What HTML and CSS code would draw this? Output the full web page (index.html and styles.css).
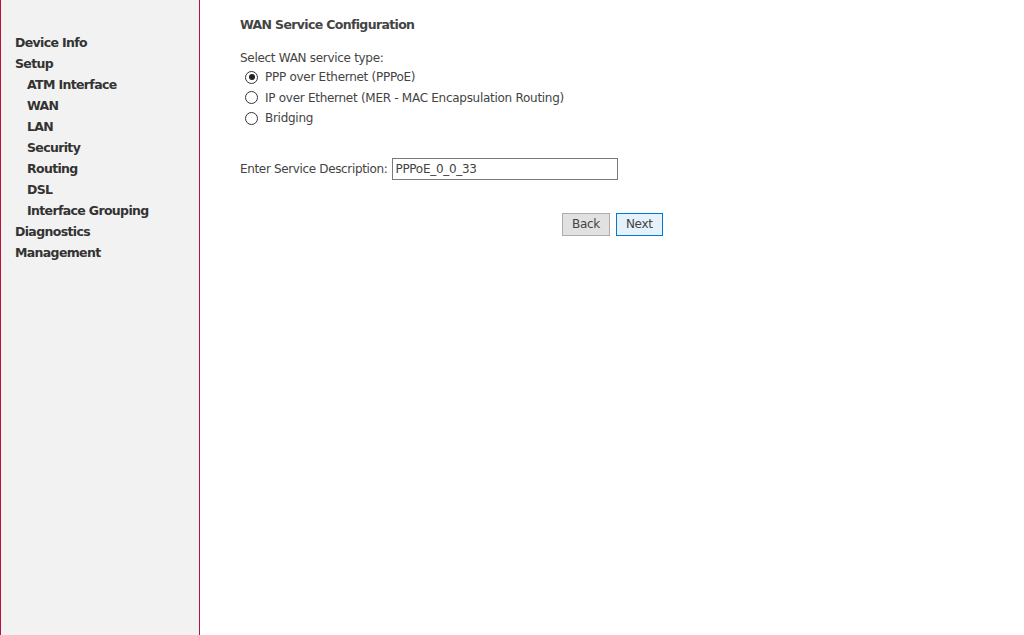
FILE: index.html
```html
<!DOCTYPE html>
<html>
<head>
<meta charset="utf-8">
<link rel="stylesheet" href="styles.css">
</head>
<body>
<div class="page">
  <nav class="sidebar">
    <a class="nav top">Device Info</a>
    <a class="nav top">Setup</a>
    <a class="nav sub">ATM Interface</a>
    <a class="nav sub">WAN</a>
    <a class="nav sub">LAN</a>
    <a class="nav sub">Security</a>
    <a class="nav sub">Routing</a>
    <a class="nav sub">DSL</a>
    <a class="nav sub">Interface Grouping</a>
    <a class="nav top">Diagnostics</a>
    <a class="nav top">Management</a>
  </nav>
  <main class="content">
    <h1 class="title">WAN Service Configuration</h1>
    <div class="label">Select WAN service type:</div>
    <label class="opt"><span class="radio checked"></span>PPP over Ethernet (PPPoE)</label>
    <label class="opt"><span class="radio"></span>IP over Ethernet (MER - MAC Encapsulation Routing)</label>
    <label class="opt"><span class="radio"></span>Bridging</label>
    <div class="desc">
      <span>Enter Service Description:</span>
      <input class="field" type="text" value="PPPoE_0_0_33">
    </div>
    <div class="buttons">
      <button class="btn">Back</button>
      <button class="btn primary">Next</button>
    </div>
  </main>
</div>
</body>
</html>
```
FILE: styles.css
```css
html, body {
  margin: 0;
  padding: 0;
  height: 100%;
  background: #fff;
}
body {
  font-family: "DejaVu Sans", Tahoma, sans-serif;
  font-size: 12px;
  color: #444;
}
.page {
  display: flex;
  min-height: 635px;
}
.sidebar {
  width: 198px;
  flex: none;
  background: #f2f2f2;
  border-left: 1px solid #b5133c;
  border-right: 1px solid #b5133c;
  padding-top: 32px;
  display: flex;
  flex-direction: column;
}
.nav {
  display: block;
  height: 21px;
  line-height: 21px;
  font-weight: bold;
  font-size: 12.5px;
  color: #333;
  white-space: nowrap;
  letter-spacing: -0.65px;
}
.nav.top { padding-left: 14px; }
.nav.sub { padding-left: 26px; }
.content {
  padding-left: 40px;
  padding-top: 17px;
}
.title {
  margin: 0;
  font-size: 12.5px;
  font-weight: bold;
  line-height: 16px;
  color: #444;
  letter-spacing: -0.65px;
}
.label {
  margin-top: 17px;
  line-height: 16px;
  letter-spacing: -0.3px;
}
.opt {
  display: flex;
  align-items: center;
  height: 20.5px;
  padding-left: 5px;
  letter-spacing: -0.28px;
}
.opt:first-of-type { margin-top: 1px; }
.radio {
  width: 11px;
  height: 11px;
  border: 1px solid #333;
  border-radius: 50%;
  margin-right: 7px;
  box-sizing: content-box;
  position: relative;
  flex: none;
}
.radio.checked::after {
  content: "";
  position: absolute;
  left: 2.5px;
  top: 2.5px;
  width: 6px;
  height: 6px;
  border-radius: 50%;
  background: #222;
}
.desc {
  margin-top: 29px;
  display: flex;
  align-items: center;
  letter-spacing: -0.35px;
}
.field {
  margin-left: 5px;
  width: 226px;
  height: 22px;
  box-sizing: border-box;
  border: 1px solid #7a7a7a;
  padding: 0 2px;
  font-family: inherit;
  font-size: 12px;
  color: #444;
  letter-spacing: -0.3px;
}
.buttons {
  margin-top: 33px;
  padding-left: 322px;
  display: flex;
  gap: 6px;
}
.btn {
  height: 23px;
  padding: 0 9px;
  font-family: inherit;
  font-size: 12px;
  color: #444;
  background: #e1e1e1;
  border: 1px solid #adadad;
  letter-spacing: -0.3px;
}
.btn.primary {
  background: #e5f1fb;
  border-color: #0078d7;
}
```
